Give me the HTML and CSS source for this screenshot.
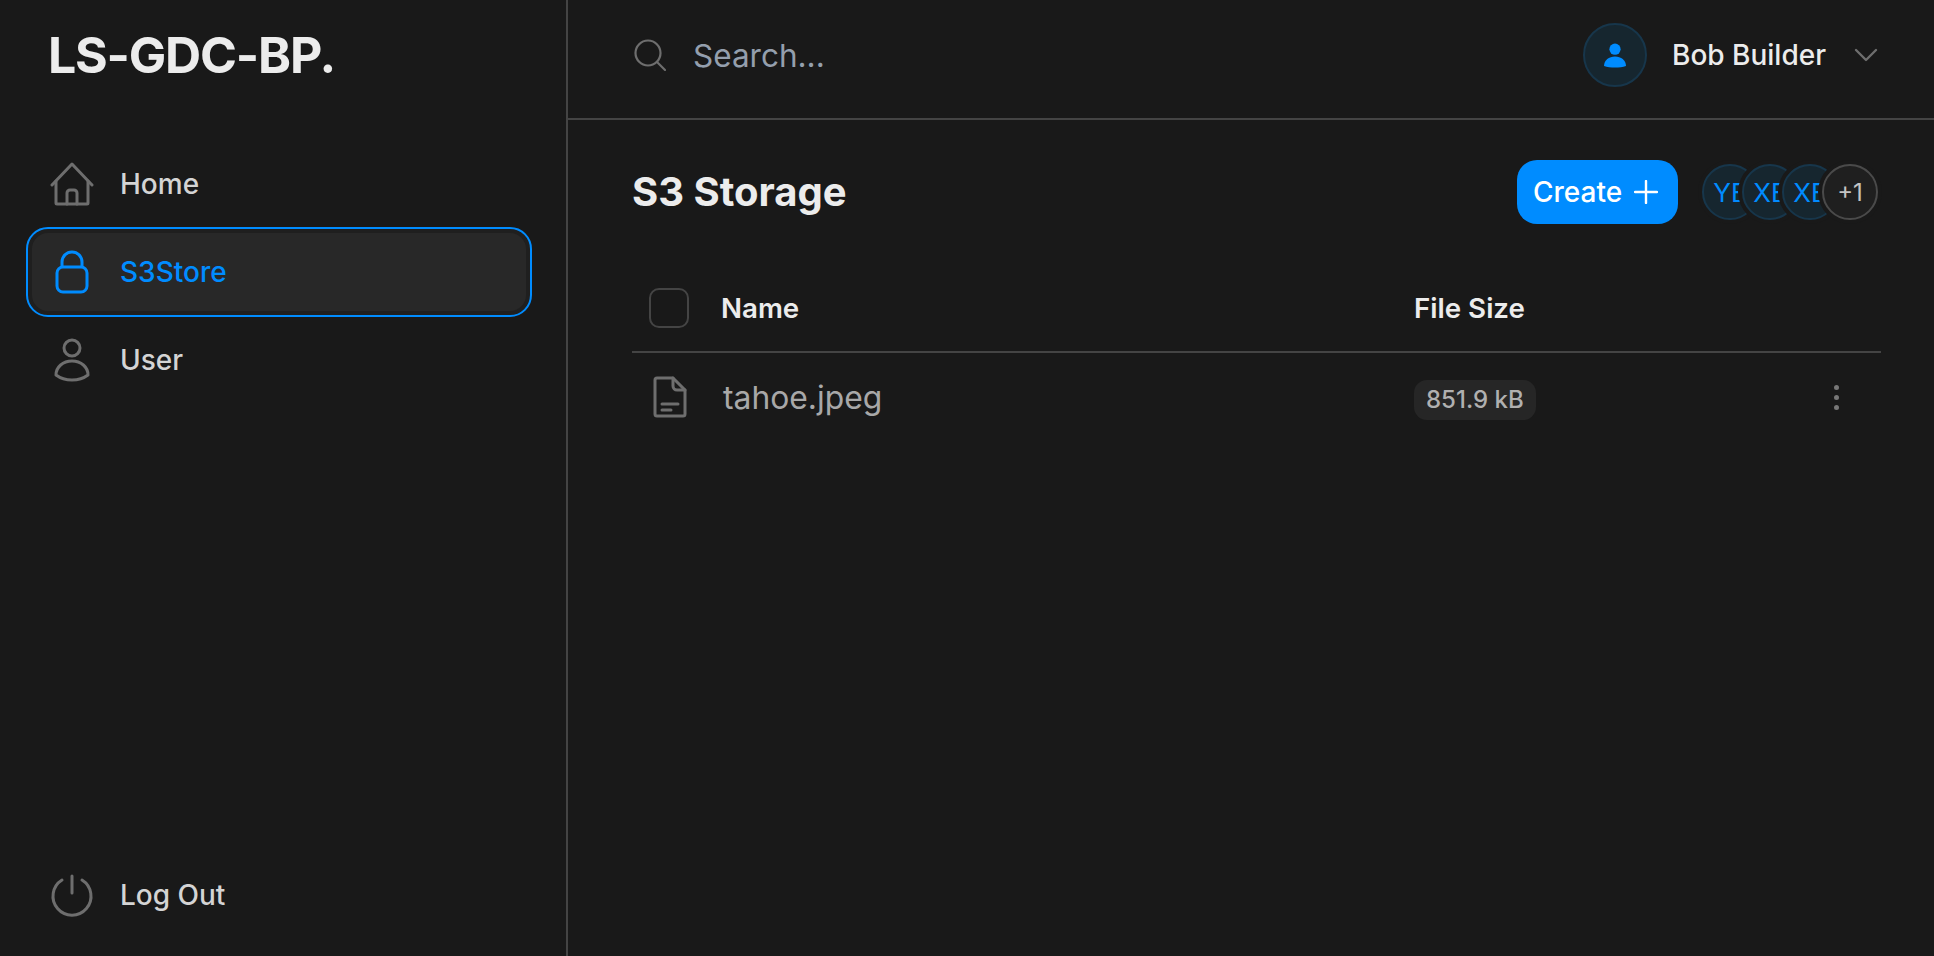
FILE: index.html
```html
<!DOCTYPE html>
<html lang="en">
<head>
<meta charset="utf-8">
<title>S3 Storage</title>
<link rel="stylesheet" href="styles.css">
</head>
<body>
<div class="app">
  <aside class="sidebar">
    <div class="logo">LS-GDC-BP.</div>
    <nav class="nav">
      <a class="nav-item">
        <svg class="nav-icon" viewBox="0 0 44 44" fill="none" stroke="currentColor" stroke-width="3" stroke-linejoin="round" stroke-linecap="round"><path d="M2 23 22 2l20 21"/><path d="M6 19v22a1 1 0 0 0 1 1h30a1 1 0 0 0 1-1V19"/><path d="M17 42V31a3 3 0 0 1 3-3h4a3 3 0 0 1 3 3v11"/></svg>
        <span>Home</span>
      </a>
      <a class="nav-item active">
        <svg class="nav-icon" viewBox="0 0 44 44" fill="none" stroke="currentColor" stroke-width="3" stroke-linejoin="round"><rect x="7" y="17" width="30" height="25" rx="6"/><path d="M12 17v-5a10 10 0 0 1 20 0v5"/></svg>
        <span>S3Store</span>
      </a>
      <a class="nav-item">
        <svg class="nav-icon" viewBox="0 0 44 44" fill="none" stroke="currentColor" stroke-width="3" stroke-linejoin="round"><circle cx="22" cy="10" r="8"/><path d="M6 37c0-8 7-14 16-14s16 6 16 14c-4 3-10 5-16 5S10 40 6 37Z"/></svg>
        <span>User</span>
      </a>
    </nav>
    <a class="nav-item logout">
      <svg class="nav-icon" viewBox="0 0 44 44" fill="none" stroke="currentColor" stroke-width="3" stroke-linecap="round"><path d="M22 3v17"/><path d="M12 7a19 19 0 1 0 20 0"/></svg>
      <span>Log Out</span>
    </a>
  </aside>
  <main class="main">
    <header class="topbar">
      <div class="search">
        <svg class="search-icon" viewBox="0 0 32 32" fill="none" stroke="currentColor" stroke-width="2.2" stroke-linecap="round"><circle cx="14" cy="14" r="12.500"/><path d="m23 23 8 8"/></svg>
        <span class="search-text">Search...</span>
      </div>
      <div class="account">
        <div class="account-avatar">
          <svg viewBox="0 0 24 24" class="account-glyph" fill="#008cff"><circle cx="12" cy="6.2" r="5.6"/><path d="M1 23c0-5.800 5-9.500 11-9.500S23 17.200 23 23c-3 1-7 1.500-11 1.500S4 24 1 23Z"/></svg>
        </div>
        <span class="account-name">Bob Builder</span>
        <svg class="chevron" viewBox="0 0 24 14" fill="none" stroke="currentColor" stroke-width="2.4" stroke-linecap="round" stroke-linejoin="round"><path d="m2 2 10 10L22 2"/></svg>
      </div>
    </header>
    <section class="content">
      <div class="title-row">
        <h1 class="title">S3 Storage</h1>
        <button class="create">Create
          <svg class="plus" viewBox="0 0 24 24" fill="none" stroke="currentColor" stroke-width="2.400" stroke-linecap="round"><path d="M12 1v22M1 12h22"/></svg>
        </button>
        <div class="avatars">
          <div class="avatar">YE</div>
          <div class="avatar">XE</div>
          <div class="avatar">XE</div>
          <div class="avatar more">+1</div>
        </div>
      </div>
      <div class="row head">
        <div class="check-cell"><span class="checkbox"></span></div>
        <div>Name</div>
        <div>File Size</div>
      </div>
      <div class="row body">
        <div class="check-cell">
          <svg class="file-icon" viewBox="0 0 34 42" fill="none" stroke="currentColor" stroke-width="3" stroke-linejoin="round" stroke-linecap="round"><path d="M4 2h16l12 12v24a2 2 0 0 1-2 2H4a2 2 0 0 1-2-2V4a2 2 0 0 1 2-2Z"/><path d="M20 2v8a4 4 0 0 0 4 4h8"/><path d="M9 28h16M9 34h9"/></svg>
        </div>
        <div class="file-name">tahoe.jpeg</div>
        <div class="chip-cell"><span class="chip">851.9 kB</span></div>
        <div class="dots"><i></i><i></i><i></i></div>
      </div>
    </section>
  </main>
</div>
</body>
</html>
```
FILE: styles.css
```css
* { box-sizing: border-box; }
html, body { margin: 0; height: 100%; }
body {
  background: #191919;
  color: #ececec;
  font-family: Inter, "Liberation Sans", sans-serif;
  overflow: hidden;
}
.app { display: flex; height: 956px; }

.sidebar {
  width: 568px;
  flex: none;
  border-right: 2px solid #444;
  padding: 0 34px 17px 26px;
  display: flex;
  flex-direction: column;
}
.logo {
  font-size: 50px;
  font-weight: 700;
  letter-spacing: -1.2px;
  line-height: 58px;
  margin: 26px 0 0 22px;
  color: #ececec;
}
.nav { margin-top: 56px; display: flex; flex-direction: column; }
.nav-item {
  display: flex;
  align-items: center;
  height: 88px;
  padding-left: 24px;
  gap: 26px;
  font-size: 28px;
  font-weight: 500;
  color: #d4d4d4;
  border-radius: 22px;
}
.nav-icon { width: 44px; height: 44px; flex: none; color: #6e6e6e; }
.nav-item.active {
  height: 90px;
  margin: -1px 0;
  border: 2px solid #008cff;
  background: #282828;
  box-shadow: inset 0 0 0 4px #1f1f1f;
  color: #008cff;
  padding-left: 22px;
}
.nav-item.active .nav-icon { color: #008cff; }
.logout { margin-top: auto; }

.main { flex: 1; min-width: 0; display: flex; flex-direction: column; }
.topbar {
  height: 120px;
  flex: none;
  border-bottom: 2px solid #444;
  display: flex;
  align-items: center;
  justify-content: space-between;
  padding: 0 56px 8px 66px;
}
.search { display: flex; align-items: center; gap: 27px; }
.search-icon { width: 32px; height: 32px; color: #6e6e6e; }
.search-text { font-size: 31.5px; color: #949fad; }
.account { display: flex; align-items: center; }
.account-avatar {
  width: 64px;
  height: 64px;
  border-radius: 50%;
  background: #16262f;
  border: 2px solid #17364b;
  display: flex;
  align-items: center;
  justify-content: center;
}
.account-glyph { width: 24px; height: 28px; }
.account-name { font-size: 28px; font-weight: 500; margin: 0 28px 0 25px; color: #ececec; }
.chevron { width: 24px; height: 14px; color: #6e6e6e; }

.content { padding: 0 53px 0 64px; }
.title-row { display: flex; align-items: center; height: 118px; margin-top: 13px; }
.title { margin: 0 auto 2px 0; font-size: 40px; font-weight: 700; color: #ececec; }
.create {
  width: 161px;
  height: 64px;
  border: 0;
  border-radius: 20px;
  background: #008cff;
  color: #fff;
  font: 500 28px Inter, "Liberation Sans", sans-serif;
  display: flex;
  align-items: center;
  gap: 12px;
  padding: 0 0 0 16px;
}
.plus { width: 24px; height: 24px; }
.avatars { display: flex; margin: 0 3px 0 24px; }
.avatar {
  width: 56px;
  height: 56px;
  border-radius: 50%;
  background: #16262f;
  border: 2px solid #17364b;
  color: #008cff;
  font-size: 26px;
  display: flex;
  align-items: center;
  justify-content: center;
  margin-left: -16px;
  box-shadow: 0 0 0 4px #191919;
  overflow: hidden;
  position: relative;
}
.avatar:first-child { margin-left: 0; }
.avatar.more { background: #1f1f1f; border-color: #4a4a4a; color: #c4c4c4; font-size: 24px; }

.row {
  display: grid;
  grid-template-columns: 89px 693px 1fr 90px;
  align-items: center;
}
.row.head {
  padding-top: 14px;
  height: 102px;
  border-bottom: 2px solid #444;
  font-size: 27.7px;
  font-weight: 570;
  color: #ececec;
}
.check-cell { display: flex; align-items: center; padding-left: 17px; }
.checkbox { width: 40px; height: 40px; border: 2px solid #444; border-radius: 10px; }
.row.body { height: 88px; }
.file-icon { width: 34px; height: 42px; color: #6e6e6e; margin-left: 4px; }
.file-name { font-size: 31.8px; color: #a8a8a8; margin-left: 2px; }
.chip-cell { padding-top: 6px; }
.chip {
  display: inline-block;
  background: #262626;
  color: #b0b0b0;
  font-size: 24px;
  font-weight: 500;
  height: 40px;
  line-height: 40px;
  padding: 0 12px;
  border-radius: 13px;
}
.dots { display: flex; flex-direction: column; align-items: center; gap: 5px; }
.dots i { width: 5px; height: 5px; border-radius: 50%; background: #777; }
```
